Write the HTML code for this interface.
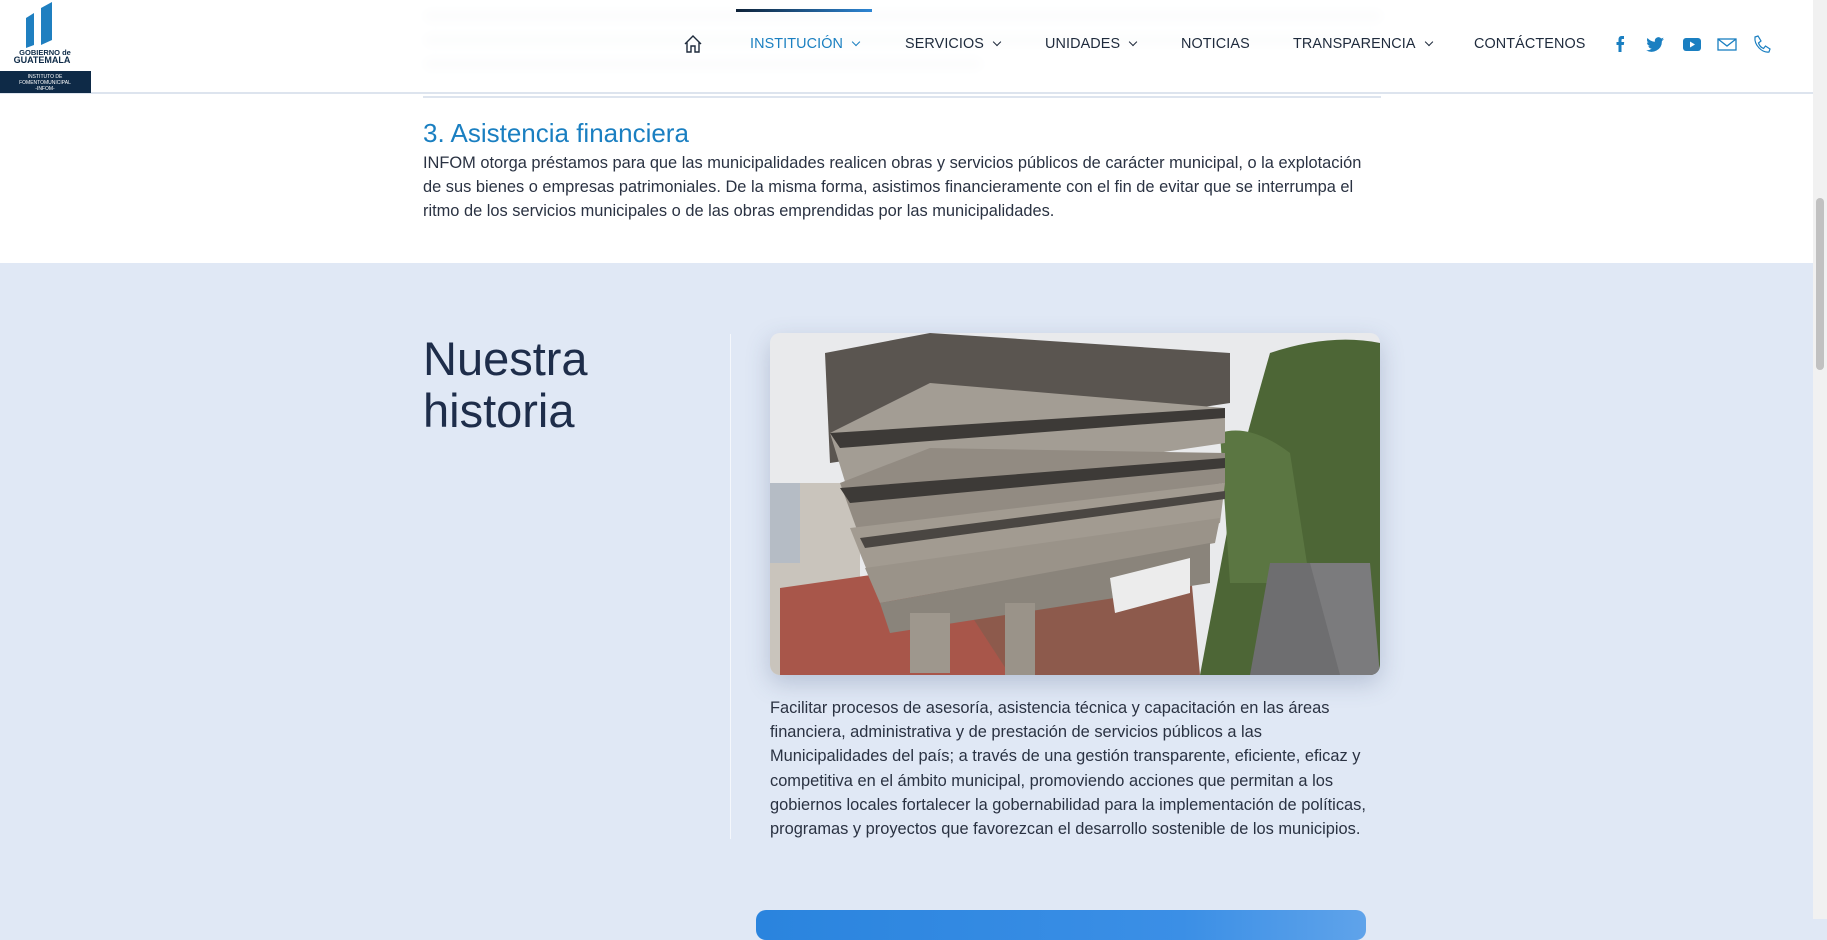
<!DOCTYPE html>
<html><head><meta charset="utf-8"><style>
*{margin:0;padding:0;box-sizing:border-box}
body{width:1827px;height:919px;overflow:hidden;background:#e0e8f5;font-family:"Liberation Sans",sans-serif;position:relative}
.top{position:absolute;left:0;top:0;width:1813px;height:263px;background:#fff}
.blur{position:absolute;height:12px;background:#d9dde3;filter:blur(5px);border-radius:6px}
header{position:absolute;left:0;top:0;width:1813px;height:94px;background:rgba(255,255,255,.9);border-bottom:2px solid #dde4ee}
.nav{position:absolute;top:36px;font-size:14.4px;color:#1e2a3c;letter-spacing:.1px;white-space:nowrap}
.nav.act{color:#1a7fc1}
.chev{display:inline-block;width:6px;height:6px;border-right:1.5px solid currentColor;border-bottom:1.5px solid currentColor;transform:rotate(45deg);margin-left:10px;position:relative;top:-3px}
h3{position:absolute;left:423px;top:118px;font-size:26px;font-weight:normal;color:#1a7fc1}
.p1{position:absolute;left:423px;top:151px;width:960px;font-size:16.4px;line-height:24px;color:#2a3242}
h2{position:absolute;left:423px;top:333px;font-size:47px;line-height:52px;font-weight:normal;color:#1e2d4a}
.p2{position:absolute;left:770px;top:696px;font-size:16.4px;line-height:24.2px;color:#2a3242;white-space:nowrap}
.scroll{position:absolute;right:0;top:0;width:14px;height:919px;background:#f1f1f1}
.thumb{position:absolute;right:3px;top:198px;width:8px;height:172px;background:#c1c1c1;border-radius:4px}
</style></head><body>
<div class="top"></div>
<div class="blur" style="left:423px;top:10px;width:960px"></div>
<div class="blur" style="left:423px;top:34px;width:960px"></div>
<div class="blur" style="left:423px;top:58px;width:560px"></div>
<header>
<svg style="position:absolute;left:0;top:0" width="91" height="93" viewBox="0 0 91 93">
<rect width="91" height="93" fill="#fff"/>
<polygon points="26,18 34,13 34,45 26,48" fill="#1f7fc0"/>
<polygon points="41,8 52,2 52,40 41,45" fill="#1f7fc0"/>
<text x="45" y="55" font-size="7.5" font-weight="bold" text-anchor="middle" fill="#0e2a47" font-family="Liberation Sans">GOBIERNO de</text>
<text x="42" y="63" font-size="9" font-weight="bold" text-anchor="middle" fill="#0e2a47" font-family="Liberation Sans">GUATEMALA</text>
<rect y="71" width="91" height="22" fill="#0e2a47"/>
<text x="45" y="78" font-size="5" text-anchor="middle" fill="#fff" font-family="Liberation Sans">INSTITUTO DE</text>
<text x="45" y="84" font-size="5" text-anchor="middle" fill="#fff" font-family="Liberation Sans">FOMENTOMUNICIPAL</text>
<text x="45" y="90" font-size="5" text-anchor="middle" fill="#fff" font-family="Liberation Sans">-INFOM-</text>
</svg>
<div style="position:absolute;left:736px;top:9px;width:136px;height:3px;background:linear-gradient(90deg,#0e2238,#2d86d4)"></div>
<svg style="position:absolute;left:683px;top:34px" width="20" height="20" viewBox="0 0 20 20" fill="none" stroke="#1e2a3c" stroke-width="1.4"><path d="M2 10 L10 2 L18 10 M4 8 V18 H8 V12 H12 V18 H16 V8"/></svg>
<div class="nav act" style="left:750px">INSTITUCIÓN<span class="chev"></span></div>
<div class="nav" style="left:905px">SERVICIOS<span class="chev"></span></div>
<div class="nav" style="left:1045px">UNIDADES<span class="chev"></span></div>
<div class="nav" style="left:1181px">NOTICIAS</div>
<div class="nav" style="left:1293px">TRANSPARENCIA<span class="chev"></span></div>
<div class="nav" style="left:1474px">CONTÁCTENOS</div>
<svg style="position:absolute;left:1612px;top:34px" width="165" height="20" viewBox="0 0 165 20">
<path d="M12 2 H9.5 C7.5 2 6.5 3.5 6.5 5.5 V8 H4.5 V11 H6.5 V18 H9.5 V11 H11.8 L12.2 8 H9.5 V6 C9.5 5.3 9.9 5 10.5 5 H12 Z" fill="#1a7fc1"/>
<path d="M52 5 c-.7.3-1.4.5-2.1.6.8-.5 1.3-1.2 1.6-2-.7.4-1.500.7-2.3.9a3.6 3.6 0 0 0-6.2 3.3c-3-.2-5.7-1.6-7.5-3.8-1 1.7-.5 3.8 1.1 4.8-.6 0-1.2-.2-1.6-.4 0 1.8 1.2 3.3 2.9 3.6-.5.2-1.1.2-1.6.1.5 1.5 1.900 2.5 3.4 2.5A7.3 7.3 0 0 1 34 16.1 10.3 10.3 0 0 0 49.9 7.4V7c.8-.5 1.5-1.2 2.1-2z" fill="#1a7fc1"/>
<rect x="71" y="4" width="18" height="13" rx="3" fill="#1a7fc1"/><path d="M78 7.5 V13.5 L83 10.5 Z" fill="#fff"/>
<rect x="106" y="5" width="18" height="11" fill="none" stroke="#1a7fc1" stroke-width="1.3"/><path d="M106 5 L115 12 L124 5" fill="none" stroke="#1a7fc1" stroke-width="1.3"/>
<path d="M143 3 L146 2 L149 7 L146.5 9 C147.5 12 149 13.5 151.5 14.5 L153.5 12 L158 15 L157 18 C150 19 142 11 143 3 Z" fill="none" stroke="#1a7fc1" stroke-width="1.2"/>
</svg>
</header>
<div style="position:absolute;left:423px;top:96px;width:958px;height:2px;background:#dde4ee"></div>
<h3>3. Asistencia financiera</h3>
<div class="p1">INFOM otorga préstamos para que las municipalidades realicen obras y servicios públicos de carácter municipal, o la explotación de sus bienes o empresas patrimoniales. De la misma forma, asistimos financieramente con el fin de evitar que se interrumpa el ritmo de los servicios municipales o de las obras emprendidas por las municipalidades.</div>
<h2>Nuestra<br>historia</h2>
<div style="position:absolute;left:730px;top:334px;width:1px;height:505px;background:#f4f7fc"></div>
<div style="position:absolute;left:770px;top:333px;width:610px;height:342px;border-radius:10px;overflow:hidden;box-shadow:0 8px 24px rgba(60,80,120,.25)">
<svg width="610" height="342" viewBox="0 0 610 342">
<rect width="610" height="342" fill="#e9eaec"/>
<rect x="0" y="150" width="90" height="200" fill="#c9c4bc"/>
<rect x="0" y="150" width="30" height="80" fill="#b5bcc5"/>
<path d="M500 20 Q560 0 610 10 V342 H430 L470 130 Q480 90 500 20Z" fill="#4d6636"/>
<path d="M450 100 Q480 90 520 120 L540 250 L460 250Z" fill="#5b7642"/>
<path d="M500 230 L560 230 L610 342 L480 342Z" fill="#6e6e70"/>
<path d="M540 230 L600 230 L610 342 L570 342Z" fill="#7b7b7d"/>
<path d="M10 255 L150 235 L300 342 L10 342Z" fill="#a8564a"/>
<path d="M180 250 L420 230 L430 342 L240 342Z" fill="#8d5a4c"/>
<polygon points="55,20 160,0 460,20 460,70 60,130" fill="#5a5550"/>
<polygon points="60,100 160,50 455,75 455,110 80,165" fill="#a39d94"/>
<polygon points="70,150 160,115 455,120 455,150 90,205" fill="#928b82"/>
<polygon points="80,195 455,150 450,190 100,245" fill="#a29b91"/>
<polygon points="95,235 450,185 445,210 110,270" fill="#9a9389"/>
<polygon points="110,270 440,210 440,250 120,300" fill="#8a847b"/>
<rect x="140" y="280" width="40" height="60" fill="#9e978d"/>
<rect x="235" y="270" width="30" height="72" fill="#9a9389"/>
<polygon points="340,245 420,225 420,260 345,280" fill="#ececec"/>
<polygon points="60,100 455,75 455,85 70,115" fill="#3d3a37"/>
<polygon points="70,155 455,125 455,135 80,170" fill="#3d3a37"/>
<polygon points="90,205 455,158 455,166 95,215" fill="#4a4642"/>
</svg></div>
<div class="p2">Facilitar procesos de asesoría, asistencia técnica y capacitación en las áreas<br>financiera, administrativa y de prestación de servicios públicos a las<br>Municipalidades del país; a través de una gestión transparente, eficiente, eficaz y<br>competitiva en el ámbito municipal, promoviendo acciones que permitan a los<br>gobiernos locales fortalecer la gobernabilidad para la implementación de políticas,<br>programas y proyectos que favorezcan el desarrollo sostenible de los municipios.</div>
<div style="position:absolute;left:756px;top:910px;width:610px;height:30px;border-radius:10px;background:linear-gradient(90deg,#2a84de,#3b8fe6 70%,#5fa3ea)"></div>
<div class="scroll"><div class="thumb"></div></div>
</body></html>
